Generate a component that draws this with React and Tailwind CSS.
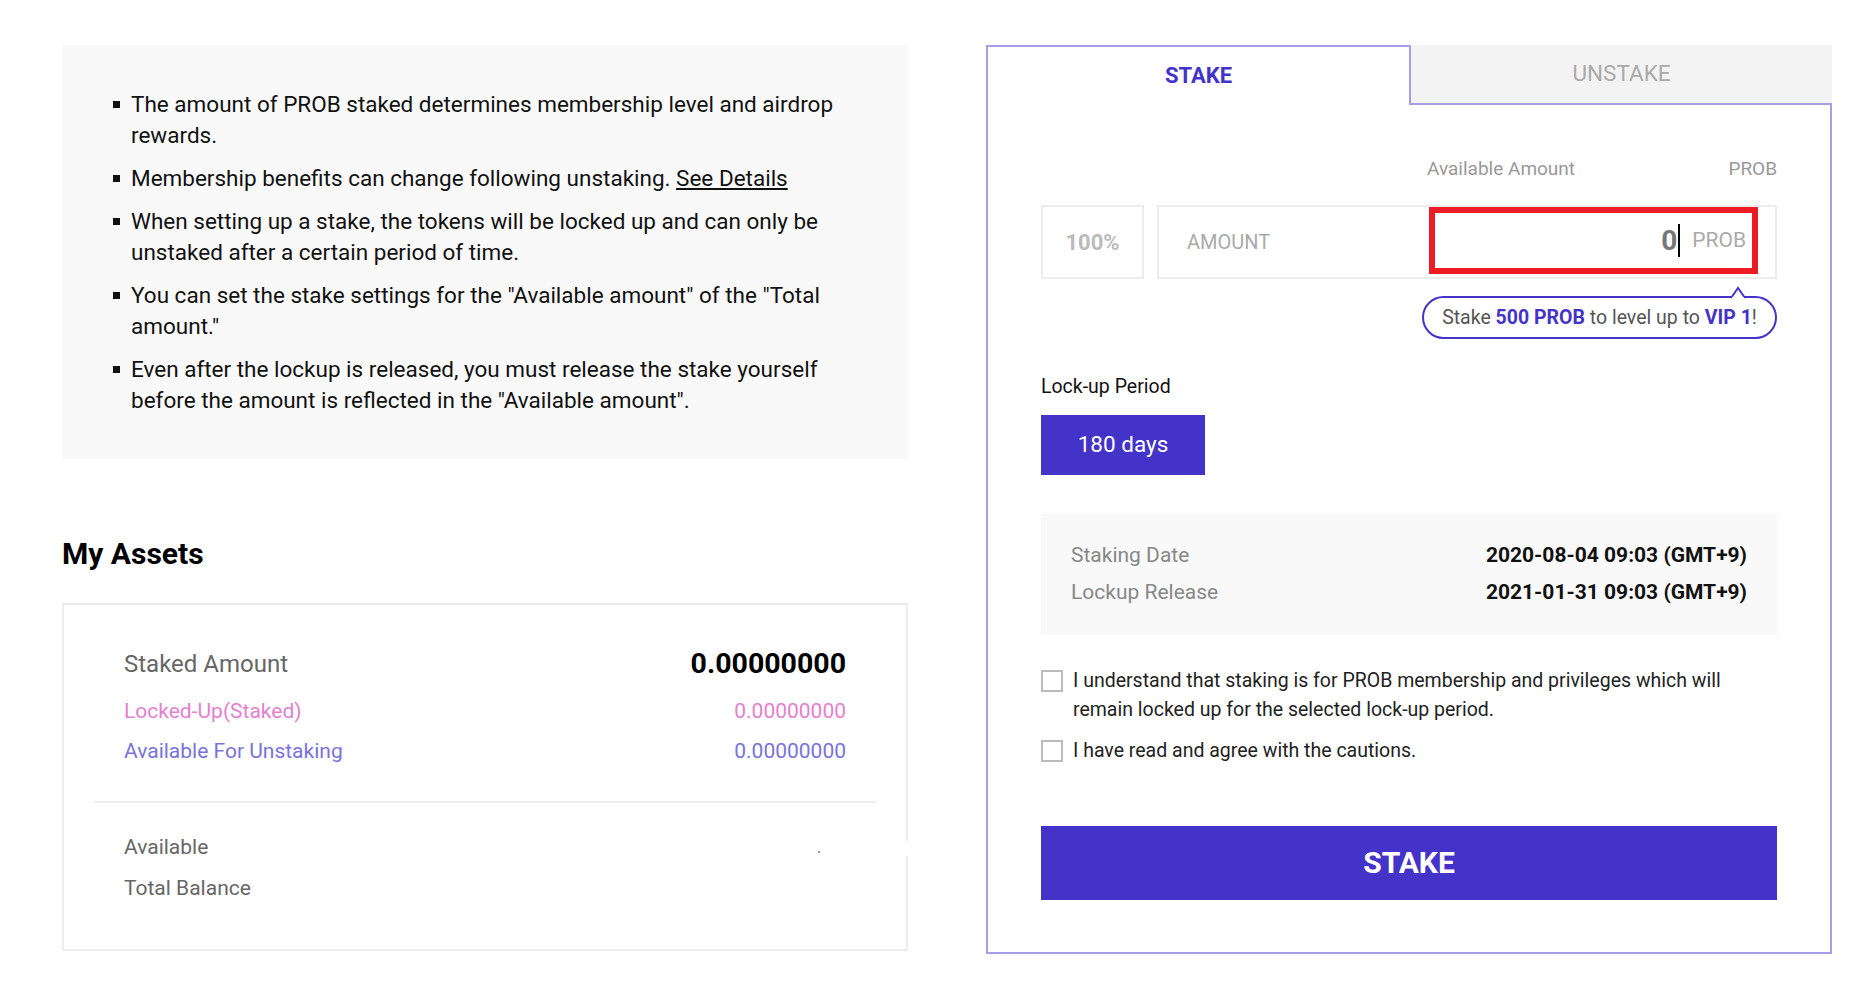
import React from 'react';

const bullets = [
  ['The amount of PROB staked determines membership level and airdrop rewards.'],
  ['Membership benefits can change following unstaking. ', 'See Details'],
  ['When setting up a stake, the tokens will be locked up and can only be unstaked after a certain period of time.'],
  ['You can set the stake settings for the "Available amount" of the "Total amount."'],
  ['Even after the lockup is released, you must release the stake yourself before the amount is reflected in the "Available amount".'],
];

function Notice() {
  return (
    <div className="h-[414px] bg-[#f9f9f9] pl-[51px] pr-[46px] pt-[44px]">
      <ul className="flex flex-col gap-[12px]">
        {bullets.map((b, i) => (
          <li key={i} className="flex items-start text-[22.5px] leading-[31px] text-[#111]">
            <span className="mt-[12px] mr-[11px] h-[7px] w-[7px] shrink-0 bg-[#111]" />
            <span>
              {b[0]}
              {b[1] && <a className="underline">{b[1]}</a>}
            </span>
          </li>
        ))}
      </ul>
    </div>
  );
}

function MyAssets() {
  return (
    <div className="mt-[77px]">
      <h2 className="text-[30px] font-bold leading-[36px] text-black">My Assets</h2>
      <div className="relative mt-[31px] h-[348px] border-2 border-[#ececec]">
        <div className="px-[60px] pt-[29px]">
          <div className="flex h-[60px] items-center justify-between">
            <span className="text-[24px] text-[#666]">Staked Amount</span>
            <span className="text-[28.5px] font-bold text-black">0.00000000</span>
          </div>
          <div className="flex h-[36px] items-center justify-between text-[21px] text-[#e57fd0]">
            <span>Locked-Up(Staked)</span>
            <span>0.00000000</span>
          </div>
          <div className="mt-[4px] flex h-[36px] items-center justify-between text-[21px] text-[#7a72dc]">
            <span>Available For Unstaking</span>
            <span>0.00000000</span>
          </div>
        </div>
        <div className="mx-[30px] mt-[31px] h-[2px] bg-[#ececec]" />
        <div className="px-[60px] pt-[27px] text-[21px] text-[#666]">
          <div className="flex h-[36px] items-center justify-between">
            <span>Available</span>
            <span className="mr-[26px] mt-[8px] h-[2px] w-[2px] bg-[#999]" />
          </div>
          <div className="mt-[5px] flex h-[36px] items-center">Total Balance</div>
        </div>
        <span className="absolute right-[-2px] top-[236px] h-[15px] w-[2px] bg-white" />
      </div>
    </div>
  );
}

function StakePanel() {
  return (
    <div className="flex w-[846px] flex-col">
      <div className="flex h-[60px]">
        <div className="flex flex-1 items-center justify-center border-2 border-b-0 border-[#a59ee8] bg-white pb-[2px] text-[22px] font-bold text-[#4433c9]">
          STAKE
        </div>
        <div className="flex flex-1 items-center justify-center border-b-2 border-[#a59ee8] bg-[#f3f3f3] text-[22.5px] text-[#aaa]">
          UNSTAKE
        </div>
      </div>
      <div className="border-2 border-t-0 border-[#a59ee8] px-[53px] pt-[46px] pb-[52px]">
        <div className="flex h-[36px] items-center justify-between text-[19px] text-[#999]">
          <span className="ml-[386px]">Available Amount</span>
          <span>PROB</span>
        </div>
        <div className="mt-[18px] flex h-[74px] gap-[13px]">
          <div className="flex w-[103px] items-center justify-center border-2 border-[#ececec] text-[22px] font-bold text-[#bbb]">
            100%
          </div>
          <div className="relative flex flex-1 items-center border-2 border-[#ececec]">
            <span className="pl-[28px] text-[20px] text-[#aaa]">AMOUNT</span>
            <div className="absolute top-[0px] bottom-[3px] left-[270px] right-[17px] flex items-center justify-end border-[6px] border-[#ed1c24] pr-[6px]">
              <span className="text-[28px] font-bold text-[#777]">0</span>
              <span className="ml-[1px] h-[33px] w-[2px] bg-black" />
              <span className="ml-[12px] text-[21px] text-[#aaa]">PROB</span>
            </div>
            <div className="absolute right-[-2px] top-[89px] flex h-[43px] w-[355px] items-center justify-center rounded-full border-2 border-[#4433c9] bg-white text-[19.5px] text-[#555]">
              <span>
                Stake <b className="text-[#4433c9]">500 PROB</b> to level up to <b className="text-[#4433c9]">VIP 1</b>!
              </span>
              <svg className="absolute right-[29px] top-[-12px]" width="16" height="13" viewBox="0 0 16 13">
                <path d="M1 12 L8 2 L15 12" fill="white" stroke="#4433c9" strokeWidth="2" />
                <rect x="2" y="11" width="12" height="3" fill="white" />
              </svg>
            </div>
          </div>
        </div>
        <div className="mt-[94px] text-[19.5px] leading-[28px] text-[#111]">Lock-up Period</div>
        <button className="mt-[14px] h-[60px] w-[164px] bg-[#4433c9] text-[22.5px] text-white">180 days</button>
        <div className="mt-[39px] h-[121px] bg-[#f9f9f9] px-[30px] pt-[24px] text-[21px]">
          <div className="flex h-[36px] items-center justify-between">
            <span className="text-[#888]">Staking Date</span>
            <span className="font-bold text-[#111]">2020-08-04 09:03 (GMT+9)</span>
          </div>
          <div className="mt-[1px] flex h-[36px] items-center justify-between">
            <span className="text-[#888]">Lockup Release</span>
            <span className="font-bold text-[#111]">2021-01-31 09:03 (GMT+9)</span>
          </div>
        </div>
        <div className="mt-[32px] flex flex-col gap-[13px] text-[19.5px] leading-[28.5px] text-[#222]">
          <label className="flex items-start">
            <span className="mt-[3px] h-[22px] w-[22px] shrink-0 border-2 border-[#bbb]" />
            <span className="ml-[10px] max-w-[680px]">
              I understand that staking is for PROB membership and privileges which will remain locked up for the selected lock-up period.
            </span>
          </label>
          <label className="flex items-start">
            <span className="mt-[3px] h-[22px] w-[22px] shrink-0 border-2 border-[#bbb]" />
            <span className="ml-[10px]">I have read and agree with the cautions.</span>
          </label>
        </div>
        <button className="mt-[60px] h-[74px] w-full bg-[#4433c9] text-[30px] font-bold text-white">STAKE</button>
      </div>
    </div>
  );
}

export default function App() {
  return (
    <div className="min-h-[981px] bg-white font-['Roboto',sans-serif]">
      <div className="flex gap-[78px] pl-[62px] pt-[45px]">
        <div className="w-[846px]">
          <Notice />
          <MyAssets />
        </div>
        <StakePanel />
      </div>
    </div>
  );
}
